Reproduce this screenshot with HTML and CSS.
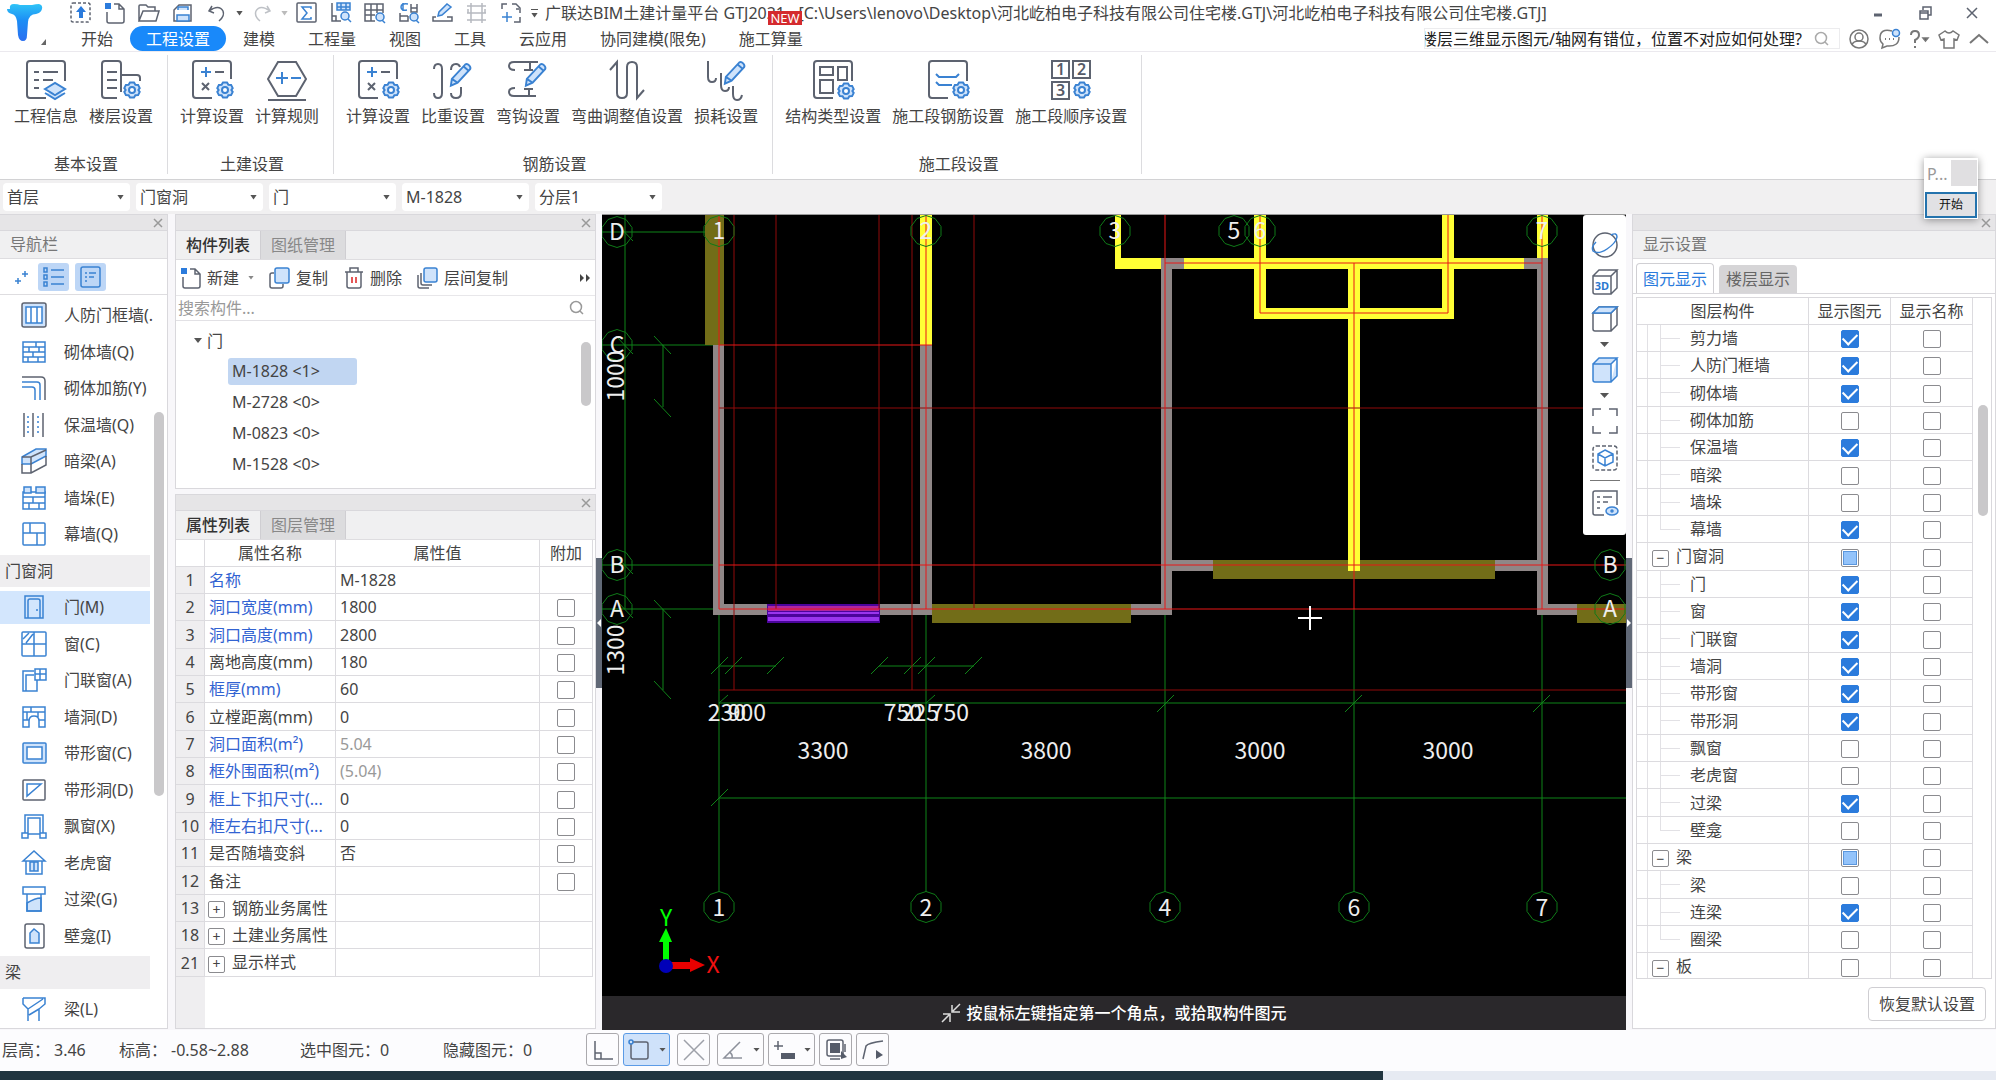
FILE: index.html
```html
<!DOCTYPE html>
<html lang="zh-CN">
<head>
<meta charset="utf-8">
<title>广联达BIM土建计量平台 GTJ2021</title>
<link rel="stylesheet" href="styles.css">
</head>
<body>
<svg class="sprite" aria-hidden="true">
  <defs>
    <linearGradient id="logo-fill" x1="0" y1="0" x2="0" y2="1"><stop offset="0" stop-color="#2fc4f7"/><stop offset=".45" stop-color="#1c8df5"/><stop offset="1" stop-color="#2a6ff0"/></linearGradient>
    <symbol id="gear" viewBox="0 0 18 18"><path d="M7 1.5h4l1.4 2.3 2.7.1 1.6 3.2L15.400 9l1.300 1.900-1.600 3.200-2.700.1L11 16.500H7l-1.400-2.300-2.700-.1-1.600-3.200L2.600 9 1.300 7.100l1.600-3.200 2.700-.1z" class="b f"/><circle cx="9" cy="9" r="3" class="b w"/></symbol>
    <symbol id="pen" viewBox="0 0 26 26"><path d="M3 24l1-7L18 2q2-1 4 1t1 4L10 21zM4 17l6 4M16 4l6 5" class="b f"/></symbol>
    <symbol id="cube" viewBox="0 0 28 28"><path d="M2 8h18v18H4q-2 0-2-2zM2 8l6-6h18l-6 6M26 2v18l-6 6"/></symbol>
    <symbol id="lens" viewBox="0 0 16 16"><circle cx="7" cy="7" r="5.500"/><path d="M11 11l3 3"/></symbol>
    <symbol id="cross" viewBox="0 0 10 10"><path d="M1 1l8 8M9 1L1 9"/></symbol>
    <symbol id="new" viewBox="0 0 22 22"><path d="M10 2h5l5 5v12q0 2-2 2H5q-2 0-2-2v-9M15 2v5h5" class="g"/><path d="M1 1h6v6H1z" fill="#2b7bdc"/></symbol>
    <symbol id="bubble" viewBox="-17 -17 34 34"><path d="M0-15.500l9 3 6 8v9l-6 8-9 3-9-3-6-8v-9l6-8z"/></symbol>
  </defs>
</svg>
<div class="app">
  <header class="top">
    <svg class="logo" viewBox="0 0 50 52"><path d="M10 9q-1-5 4-5 4 0 6 1h12q4-1 7-1 4 1 3 5t-6 5q-7 0-8 8l-1 13q0 6-4 6t-5-6l-1-14q-1-6-5-7-5-1-5-5z" fill="url(#logo-fill)"/><path d="M46 39v6h-5z" fill="#666"/></svg>
    <div class="bars">
      <div class="title-row">
        <div class="quick">
          <button aria-label="上传"><svg viewBox="0 0 22 22"><rect x="1" y="1" width="19" height="19" rx="2" class="g" stroke-dasharray="3 2"/><path d="M11 4l5 6h-3v6H9v-6H6z" fill="#2b7bdc"/></svg></button>
          <button aria-label="新建工程"><svg viewBox="0 0 22 22"><use href="#new"/></svg></button>
          <button aria-label="打开"><svg viewBox="0 0 22 22"><path d="M1 19V4q0-1 1-1h6l2 2h7v4M1 19L5 9h16l-3 10z" class="g"/></svg></button>
          <button aria-label="保存"><svg viewBox="0 0 22 22"><path d="M2 8l5-5h12v16H2z" class="g"/><path d="M6 8V5h10v3M5 19v-6h12v6z" class="b f"/></svg></button>
          <button aria-label="撤销"><svg viewBox="0 0 22 22"><path d="M6 4L3 9l5 2M3 9q10-7 14 0 2 5-4 10" class="g"/></svg></button>
          <i class="caret"></i>
          <button aria-label="重做"><svg viewBox="0 0 22 22" opacity=".4"><path d="M16 4l3 5-5 2M19 9Q9 2 5 9q-2 5 4 10" class="g"/></svg></button>
          <i class="caret faint"></i>
          <button aria-label="汇总计算"><svg viewBox="0 0 22 22"><rect x="1" y="1" width="19" height="19" rx="1" class="g"/><path d="M15 7V5H6l5 6-5 6h9v-2" class="b"/></svg></button>
          <button aria-label="查看报表"><svg viewBox="0 0 22 22"><path d="M2 1v18h9M2 14h4v5" class="g"/><path d="M7 1h13v7H7zM11 1v7M16 1v7M7 5h13" class="b f"/><circle cx="15" cy="14" r="4" class="b f"/><path d="M18 17l3 3" class="b"/></svg></button>
          <button aria-label="查看工程量"><svg viewBox="0 0 22 22"><path d="M11 19H1V2h18v9M1 8h18M1 13h10M7 2v17M13 2v9" class="g"/><circle cx="16" cy="15" r="4" class="b f"/><path d="M18 18l3 3" class="b"/></svg></button>
          <button aria-label="查看计算式"><svg viewBox="0 0 22 22"><path d="M2 11v8h8v-5M2 14h8M13 2v8h6V2M13 6h6" class="g"/><path d="M10 2q-7-1-7 3t6 3M5 1v8" class="b"/><circle cx="16" cy="15" r="4" class="b f"/><path d="M18 18l3 3" class="b"/></svg></button>
          <button aria-label="编辑"><svg viewBox="0 0 22 22"><path d="M6 14l1-4 8-8 4 3-9 8z" class="b f"/><path d="M4 15H1v4h19v-4h-5" class="g"/></svg></button>
          <button aria-label="钢筋三维"><svg viewBox="0 0 22 22" opacity=".45"><path d="M5 1v20M16 1v20M1 4h19M1 11h19M1 18h19M2 7v4M19 7v4" class="g"/></svg></button>
          <button aria-label="拾取"><svg viewBox="0 0 22 22"><path d="M2 7V2h5M12 2h4l4 4v5M20 15v5h-6M16 7h3" class="g"/><path d="M7 10v10M2 15h10" class="b"/></svg></button>
          <span class="drop"><i class="caret"></i></span>
        </div>
        <h1>广联达BIM土建计量平台 GTJ2021 - [C:\Users\lenovo\Desktop\河北屹柏电子科技有限公司住宅楼.GTJ\河北屹柏电子科技有限公司住宅楼.GTJ]</h1>
        <span class="badge">NEW</span>
        <div class="win">
          <button aria-label="最小化"><svg viewBox="0 0 16 16"><path d="M4 10h8" class="g" stroke-width="3"/></svg></button>
          <button aria-label="还原"><svg viewBox="0 0 16 16"><path d="M6 5V2h8v8h-3M3 6h8v8H3zM3 8h8" class="g"/></svg></button>
          <button aria-label="关闭"><svg viewBox="0 0 16 16"><path d="M3 3l10 10M13 3L3 13" class="g"/></svg></button>
        </div>
      </div>
      <div class="menu-row">
        <nav class="menu"><a href="#">开始</a><a href="#" class="on">工程设置</a><a href="#">建模</a><a href="#">工程量</a><a href="#">视图</a><a href="#">工具</a><a href="#">云应用</a><a href="#">协同建模(限免)</a><a href="#">施工算量</a></nav>
        <div class="help">
          <div class="find"><input aria-label="搜索帮助" value="楼层三维显示图元/轴网有错位，位置不对应如何处理?"><svg viewBox="0 0 16 16"><use href="#lens"/></svg></div>
          <button aria-label="用户"><svg viewBox="0 0 22 22"><circle cx="11" cy="11" r="9"/><circle cx="11" cy="9" r="4"/><path d="M4 17q1-4 7-4t7 4"/></svg></button>
          <button aria-label="消息"><svg viewBox="0 0 22 22"><path d="M14 3q-12-3-12 7 0 4 3 6l-1 4 5-2q12 1 12-9"/><path d="M7 11h1M11 11h1M15 11h1" stroke-width="2"/><circle cx="18" cy="5" r="3.500" class="b f"/></svg></button>
          <button aria-label="帮助"><svg viewBox="0 0 22 22"><path d="M3 7q0-4 4-4t4 4q0 3-4 5v3M7 18v2" stroke-width="2"/><path d="M15 10h5l-2.500 3z" fill="#555"/></svg></button>
          <button aria-label="皮肤"><svg viewBox="0 0 22 22"><path d="M7 3L1 7l2 5 3-1v9h10v-9l3 1 2-5-6-4q-4 4-8 0z"/></svg></button>
          <button aria-label="收起"><svg viewBox="0 0 22 22"><path d="M2 15l9-8 9 8" stroke-width="2"/></svg></button>
        </div>
      </div>
    </div>
  </header>

  <section class="ribbon">
    <div class="group"><div class="tools">
      <button><svg viewBox="0 0 40 40"><path d="M20 38H4q-3 0-3-3V4q0-3 3-3h32q3 0 3 3v17M8 12h5M17 12h15M8 20h5M17 20h10M8 28h5" class="g"/><path d="M19 29l10-6 10 6-10 6zM19 33l10 6 10-6" class="b f"/></svg>工程信息</button>
      <button><svg viewBox="0 0 40 40"><path d="M16 38H4q-3 0-3-3V4q0-3 3-3h13q3 0 3 3v28M6 12h10M6 20h10M6 28h10M20 15h16q3 0 3 3v3" class="g"/><use href="#gear" x="22" y="21" width="18" height="18"/></svg>楼层设置</button>
    </div><h2>基本设置</h2></div>
    <div class="group"><div class="tools">
      <button><svg viewBox="0 0 40 40"><path d="M20 38H4q-3 0-3-3V4q0-3 3-3h32q3 0 3 3v15M23 12h9M10 23l7 7M17 23l-7 7" class="g"/><path d="M9 12h10M14 7v10" class="b"/><use href="#gear" x="24" y="21" width="18" height="18"/></svg>计算设置</button>
      <button><svg viewBox="0 0 40 40"><path d="M11 2h18l10 17-10 17H11L1 19zM1 40h38" class="g"/><path d="M9 18h12M15 12v12M24 18h10" class="b"/></svg>计算规则</button>
    </div><h2>土建设置</h2></div>
    <div class="group"><div class="tools">
      <button><svg viewBox="0 0 40 40"><path d="M20 38H4q-3 0-3-3V4q0-3 3-3h32q3 0 3 3v15M23 12h9M10 23l7 7M17 23l-7 7" class="g"/><path d="M9 12h10M14 7v10" class="b"/><use href="#gear" x="24" y="21" width="18" height="18"/></svg>计算设置</button>
      <button><svg viewBox="0 0 40 40"><path d="M1 9q0-5 4-5t4 5v24q0 5-4 5t-4-5M18 10q0-6 5-6 3 0 4 3M18 33q0 5 5 5t5-5v-6" class="g"/><use href="#pen" x="15" y="2" width="25" height="26"/></svg>比重设置</button>
      <button><svg viewBox="0 0 40 40"><path d="M30 2H6Q1 2 1 6t6 4M22 2v8M28 36H6q-5 0-5-4t6-4M16 10h9M16 29h9M21 29v7" class="g"/><use href="#pen" x="15" y="2" width="25" height="26"/></svg>弯钩设置</button>
      <button><svg viewBox="0 0 40 40"><path d="M3 10l7-8v31q0 5 5 5t5-5V7q0-5 5-5t5 5v31l7-8" class="g"/></svg>弯曲调整值设置</button>
      <button><svg viewBox="0 0 40 40"><path d="M2 1v16q0 5 4 5t4-4M15 13v12q0 6 4 6t4-4M27 26v8q0 6 4 6t5-5" class="g"/><use href="#pen" x="16" y="0" width="25" height="26"/></svg>损耗设置</button>
    </div><h2>钢筋设置</h2></div>
    <div class="group"><div class="tools">
      <button><svg viewBox="0 0 40 40"><path d="M20 38H4q-3 0-3-3V4q0-3 3-3h32q3 0 3 3v17M7 7h13v8H7zM25 7h9v13h-9zM7 20h13v13H7z" class="g"/><use href="#gear" x="24" y="22" width="18" height="18"/></svg>结构类型设置</button>
      <button><svg viewBox="0 0 40 40"><path d="M20 38H4q-3 0-3-3V4q0-3 3-3h32q3 0 3 3v17" class="g"/><path d="M8 14l3 3h17l3-3M8 22l3 3h13" class="b"/><use href="#gear" x="24" y="21" width="18" height="18"/></svg>施工段钢筋设置</button>
      <button><svg viewBox="0 0 40 40"><path d="M1 1h17v17H1zM22 1h17v17H22zM1 22h17v17H1z" class="g"/><text x="9.500" y="15">1</text><text x="30.500" y="15">2</text><text x="9.500" y="36">3</text><use href="#gear" x="22" y="21" width="18" height="18"/></svg>施工段顺序设置</button>
    </div><h2>施工段设置</h2></div>
  </section>

  <div class="filters">
    <div class="pick"><select aria-label="楼层"><option>首层</option></select></div>
    <div class="pick"><select aria-label="构件类别"><option>门窗洞</option></select></div>
    <div class="pick"><select aria-label="构件类型"><option>门</option></select></div>
    <div class="pick"><select aria-label="构件"><option>M-1828</option></select></div>
    <div class="pick"><select aria-label="分层"><option>分层1</option></select></div>
  </div>

  <main class="work">
    <aside class="panel nav">
      <div class="strip"><button aria-label="关闭导航栏"><svg viewBox="0 0 10 10"><use href="#cross"/></svg></button></div>
      <h2 class="caption">导航栏</h2>
      <div class="nav-tools">
        <button aria-label="定位"><svg viewBox="0 0 28 28"><path d="M18 8v6M15 11h6M11 15v6M8 18h6" class="b"/></svg></button>
        <button class="on" aria-label="列表"><svg viewBox="0 0 28 28"><path d="M4 5h3v4H4zM4 12h3v4H4zM4 19h3v4H4zM11 7h13M11 14h13M11 21h13" class="b"/></svg></button>
        <button class="on" aria-label="详情"><svg viewBox="0 0 28 28"><rect x="4" y="4" width="19" height="20" rx="2" class="b"/><path d="M8 10h2M12 10h7M8 14h2M12 14h5M8 18h2" class="b"/></svg></button>
      </div>
      <div class="nav-body">
        <ul>
          <li><svg viewBox="0 0 26 26"><rect x="1" y="1" width="24" height="24" rx="2" class="g f"/><path d="M5 5h16v16H5zM10 5v16M16 5v16" class="b w"/></svg><a href="#">人防门框墙(.</a></li>
          <li><svg viewBox="0 0 26 26"><path d="M2 3h22v20H2zM2 8h22M2 13h22M2 18h22M15 3v5M8 8v5M18 8v5M12 13v5M7 18v5M17 18v5" class="b"/></svg><a href="#">砌体墙(Q)</a></li>
          <li><svg viewBox="0 0 26 26"><path d="M1 2h19q4 0 4 4v19" class="g"/><path d="M1 7h15q3 0 3 3v15M1 12h10q3 0 3 3v10" class="b"/></svg><a href="#">砌体加筋(Y)</a></li>
          <li><svg viewBox="0 0 26 26"><path d="M3 1v24M12 1v24M22 1v24" class="g"/><path d="M7 4v19M17 4v19" class="b" stroke-dasharray="2 3"/></svg><a href="#">保温墙(Q)</a></li>
          <li><svg viewBox="0 0 26 26"><path d="M1 9l14-8h10v7l-15 8H1z" class="b f"/><path d="M1 16v9h9l15-8V8M10 9v16M1 9h9l15-7" class="g"/></svg><a href="#">暗梁(A)</a></li>
          <li><svg viewBox="0 0 26 26"><path d="M2 7h22v17H2zM2 12h22M2 18h22M12 12v6M18 18v6M8 18v6" class="b"/><path d="M3 2h7v6H3zM15 2h9v6h-9z" class="b f"/></svg><a href="#">墙垛(E)</a></li>
          <li><svg viewBox="0 0 26 26"><rect x="2" y="2" width="22" height="22" rx="1" class="b"/><path d="M2 12h22M9 2v10M16 12v12" class="b"/></svg><a href="#">幕墙(Q)</a></li>
          <li class="head">门窗洞</li>
          <li class="on"><svg viewBox="0 0 26 26"><path d="M4 2h18v22H4zM7 24V7q0-2 2-2h8q2 0 2 2v17M16 15v2" class="b"/></svg><a href="#">门(M)</a></li>
          <li><svg viewBox="0 0 26 26"><rect x="1" y="1" width="24" height="24" rx="1" class="b"/><path d="M13 1v24M1 13h24M2 8l6-6M5 12l7-9" class="b"/></svg><a href="#">窗(C)</a></li>
          <li><svg viewBox="0 0 26 26"><path d="M13 24H2V4h11M16 13v11h-3M5 24V8h8M14 2h11v11H14zM14 7h11M19 2v11" class="b"/></svg><a href="#">门联窗(A)</a></li>
          <li><svg viewBox="0 0 26 26"><path d="M2 3h22v20h-6v-6q0-5-5-5t-5 5v6H2zM2 8h22M2 16h6M18 16h6M10 3v5M17 8v5M6 8v8" class="b"/></svg><a href="#">墙洞(D)</a></li>
          <li><svg viewBox="0 0 26 26"><rect x="2" y="3" width="23" height="20" rx="1" class="b f"/><path d="M6 7h15v12H6z" class="b w"/></svg><a href="#">带形窗(C)</a></li>
          <li><svg viewBox="0 0 26 26"><rect x="2" y="3" width="22" height="20" rx="1" class="g"/><path d="M6 19V7h14z" class="b"/></svg><a href="#">带形洞(D)</a></li>
          <li><svg viewBox="0 0 26 26"><path d="M4 20V2h18v18M7 20V5h12v15M1 20h6v5H1zM19 20h6v5h-6zM7 21h12" class="b"/></svg><a href="#">飘窗(X)</a></li>
          <li><svg viewBox="0 0 26 26"><path d="M2 11L13 1l11 10zM5 11v13h16V11" class="b"/><path d="M9 12h8v9H9zM13 12v9" class="b f"/></svg><a href="#">老虎窗</a></li>
          <li><svg viewBox="0 0 26 26"><path d="M6 17q8-5 14-5v13H6z" class="b f"/><path d="M2 1h22v7H2zM6 8v17h14V8" class="b"/></svg><a href="#">过梁(G)</a></li>
          <li><svg viewBox="0 0 26 26"><rect x="4" y="1" width="19" height="24" rx="2" class="g"/><path d="M9 20V10l4-4 5 4v10z" class="b f"/></svg><a href="#">壁龛(I)</a></li>
          <li class="head">梁</li>
          <li><svg viewBox="0 0 26 26"><path d="M2 2h22v6L18 13v12M2 2v6l5 5v12M7 13L22 3M8 19l10-6" class="b"/></svg><a href="#">梁(L)</a></li>
        </ul>
        <div class="track"><i class="thumb nav-thumb"></i></div>
      </div>
    </aside>

    <div class="middle">
      <section class="panel parts">
        <div class="strip"><button aria-label="关闭构件列表"><svg viewBox="0 0 10 10"><use href="#cross"/></svg></button></div>
        <div class="tabs"><button class="on">构件列表</button><button>图纸管理</button></div>
        <div class="part-tools">
          <button><svg viewBox="0 0 22 22"><use href="#new"/></svg>新建<i class="caret"></i></button>
          <button><svg viewBox="0 0 22 22"><path d="M5 6H3q-2 0-2 2v11q0 2 2 2h9q2 0 2-2v-2" class="g"/><rect x="6" y="1" width="14" height="15" rx="2" class="b f"/></svg>复制</button>
          <button><svg viewBox="0 0 22 22"><path d="M2 5h18M7 5V1h8v4M4 5v14q0 2 2 2h10q2 0 2-2V5" class="g"/><path d="M9 10v6M13 10v6" stroke="#d22"/></svg>删除</button>
          <button><svg viewBox="0 0 22 22"><path d="M1 8v11q0 2 2 2h9M4 6v10q0 2 2 2h9" class="g"/><rect x="7" y="1" width="13" height="14" rx="2" class="b f"/></svg>层间复制</button>
          <button class="more" aria-label="更多"><svg viewBox="0 0 12 12"><path d="M1 2l4 4-4 4zM7 2l4 4-4 4z" fill="#444"/></svg></button>
        </div>
        <div class="search"><input placeholder="搜索构件..." aria-label="搜索构件"><svg viewBox="0 0 16 16"><use href="#lens"/></svg></div>
        <div class="tree-body">
          <ul class="tree"><li class="root"><i class="caret"></i>门</li><li><a href="#" class="on">M-1828 &lt;1&gt;</a></li><li><a href="#">M-2728 &lt;0&gt;</a></li><li><a href="#">M-0823 &lt;0&gt;</a></li><li><a href="#">M-1528 &lt;0&gt;</a></li></ul>
          <div class="track"><i class="thumb tree-thumb"></i></div>
        </div>
      </section>

      <section class="panel props">
        <div class="strip"><button aria-label="关闭属性列表"><svg viewBox="0 0 10 10"><use href="#cross"/></svg></button></div>
        <div class="tabs"><button class="on">属性列表</button><button>图层管理</button></div>
        <div class="prop-body">
        <table class="grid facts">
          <colgroup><col class="c-no"><col class="c-name"><col><col class="c-add"></colgroup>
          <thead><tr><th></th><th>属性名称</th><th>属性值</th><th>附加</th></tr></thead>
          <tbody>
            <tr><td>1</td><td class="key">名称</td><td>M-1828</td><td></td></tr>
            <tr><td>2</td><td class="key">洞口宽度(mm)</td><td>1800</td><td><input type="checkbox" aria-label="附加洞口宽度"></td></tr>
            <tr><td>3</td><td class="key">洞口高度(mm)</td><td>2800</td><td><input type="checkbox" aria-label="附加洞口高度"></td></tr>
            <tr><td>4</td><td>离地高度(mm)</td><td>180</td><td><input type="checkbox" aria-label="附加离地高度"></td></tr>
            <tr><td>5</td><td class="key">框厚(mm)</td><td>60</td><td><input type="checkbox" aria-label="附加框厚"></td></tr>
            <tr><td>6</td><td>立樘距离(mm)</td><td>0</td><td><input type="checkbox" aria-label="附加立樘距离"></td></tr>
            <tr><td>7</td><td class="key">洞口面积(m²)</td><td class="dim">5.04</td><td><input type="checkbox" aria-label="附加洞口面积"></td></tr>
            <tr><td>8</td><td class="key">框外围面积(m²)</td><td class="dim">(5.04)</td><td><input type="checkbox" aria-label="附加框外围面积"></td></tr>
            <tr><td>9</td><td class="key">框上下扣尺寸(...</td><td>0</td><td><input type="checkbox" aria-label="附加框上下扣尺寸"></td></tr>
            <tr><td>10</td><td class="key">框左右扣尺寸(...</td><td>0</td><td><input type="checkbox" aria-label="附加框左右扣尺寸"></td></tr>
            <tr><td>11</td><td>是否随墙变斜</td><td>否</td><td><input type="checkbox" aria-label="附加是否随墙变斜"></td></tr>
            <tr><td>12</td><td>备注</td><td></td><td><input type="checkbox" aria-label="附加备注"></td></tr>
            <tr><td>13</td><td class="fold"><button class="box" aria-label="展开">+</button>钢筋业务属性</td><td></td><td></td></tr>
            <tr><td>18</td><td class="fold"><button class="box" aria-label="展开">+</button>土建业务属性</td><td></td><td></td></tr>
            <tr><td>21</td><td class="fold"><button class="box" aria-label="展开">+</button>显示样式</td><td></td><td></td></tr>
          </tbody>
        </table>
        </div>
      </section>
    </div>

    <div class="gutter"><button class="grip" aria-label="收起左侧"><svg viewBox="0 0 6 10"><path d="M5 1v8L1 5z" fill="#fff"/></svg></button></div>

    <section class="stage">
      <svg class="plan" viewBox="602 215 1024 781" preserveAspectRatio="xMinYMin slice">
        <rect x="602" y="215" width="1024" height="781"/>
        <g class="axis">
          <path d="M625 215V609M602 232H719M602 345H719M602 565H719M602 609H719M663 345V407M663 609V690"/>
          <path d="M719 609V892M926 609V892M1165 609V892M1354 609V892M1542 609V892M719 703H1626M719 798H1626M719 666H776M879 666H974"/>
          <path d="M654 336l17 18M654 399l17 18M654 600l17 18M654 681l17 18M616 223l17 18M616 336l17 18M616 556l17 18M616 600l17 18"/>
          <path d="M711 674l17-17M725 674l17-17M767 674l17-17M871 674l17-17M904 674l17-17M918 674l17-17M965 674l17-17M719 703l9-8M926 703l9-8M1157 712l17-17M1345 712l17-17M1533 712l17-17M711 806l17-17"/>
        </g>
        <g class="wall"><path d="M713 345h11v259h43v11h-54zM920 345h12v270h-52v-11h40zM1131 604h30V258h23v11h-12v291h41v11h-41v44h-41zM1495 560h42V269h-13v-11h24v346h29v11h-40v-44h-42z"/></g>
        <g class="olive"><path d="M705 215h19v130h-19zM932 604h199v19H932zM1213 560h282v19h-282zM1577 604h49v19h-49z"/></g>
        <g class="yellow"><path d="M920 215h12v130h-12zM1115 215h6v43h40v11h-46zM1537 215h11v43h-11zM1184 258h340v11h-340zM1254 215h12v104h-12zM1442 215h12v104h-12zM1254 308h200v11h-200zM1348 258h12v313h-12z"/></g>
        <path d="M767 604h113v19H767z" fill="#4b059b"/><path d="M768 606h111v5H768z" fill="#b0259c"/><path d="M768 612h111v2H768zM768 617h111v4H768z" fill="#9a35ee"/>
        <g class="red low"><path d="M734 215V690M776 215V609M879 215V609M912 215V690M974 215V608M719 408H1626M719 690H1626"/></g>
        <g class="red"><path d="M719 215V609M926 215V609M719 345H932M719 565H1626M719 609H1626M1165 215V609M1165 263H1542M1260 215V313H1448V215M1354 263V609M1542 215V609"/></g>
        <g class="ring">
          <use href="#bubble" x="702" y="214" width="34" height="34"/><use href="#bubble" x="909" y="214" width="34" height="34"/><use href="#bubble" x="1098" y="214" width="34" height="34"/><use href="#bubble" x="1217" y="214" width="34" height="34"/><use href="#bubble" x="1243" y="214" width="34" height="34"/><use href="#bubble" x="1525" y="214" width="34" height="34"/>
          <use href="#bubble" x="600" y="215" width="34" height="34"/><use href="#bubble" x="600" y="328" width="34" height="34"/><use href="#bubble" x="600" y="548" width="34" height="34"/><use href="#bubble" x="600" y="592" width="34" height="34"/><use href="#bubble" x="1593" y="548" width="34" height="34"/><use href="#bubble" x="1593" y="592" width="34" height="34"/>
          <use href="#bubble" x="702" y="890" width="34" height="34"/><use href="#bubble" x="909" y="890" width="34" height="34"/><use href="#bubble" x="1148" y="890" width="34" height="34"/><use href="#bubble" x="1337" y="890" width="34" height="34"/><use href="#bubble" x="1525" y="890" width="34" height="34"/>
        </g>
        <g class="label">
          <text x="719" y="239">1</text><text x="926" y="239">2</text><text x="1115" y="239">3</text><text x="1234" y="239">5</text><text x="1260" y="239">6</text><text x="1542" y="239">7</text>
          <text x="617" y="240">D</text><text x="617" y="353">C</text><text x="617" y="573">B</text><text x="617" y="617">A</text><text x="1610" y="573">B</text><text x="1610" y="617">A</text>
          <text x="719" y="916">1</text><text x="926" y="916">2</text><text x="1165" y="916">4</text><text x="1354" y="916">6</text><text x="1542" y="916">7</text>
          <text x="727" y="721">230</text><text x="747" y="721">900</text><text x="903" y="721">750</text><text x="920" y="721">225</text><text x="950" y="721">750</text>
          <text x="823" y="759">3300</text><text x="1046" y="759">3800</text><text x="1260" y="759">3000</text><text x="1448" y="759">3000</text>
          <text transform="translate(624 376) rotate(-90)">1000</text><text transform="translate(624 650) rotate(-90)">1300</text>
          <text x="666" y="926" class="up">Y</text><text x="713" y="973" class="right">X</text>
        </g>
        <path d="M663 966V942h-4l7-14 6 14h-3v24z" fill="#0f0"/><path d="M666 962h24v-4l15 7-15 7v-3h-24z" fill="#e80000"/><circle cx="666" cy="966" r="7" fill="#0000b8"/>
        <path d="M1310 606v24M1298 618h24" stroke="#fff" stroke-width="2"/>
      </svg>
      <div class="hint"><svg viewBox="0 0 20 20"><path d="M19 1l-7 7M11 2v7h8M1 19l7-7M2 11h7v8"/></svg>按鼠标左键指定第一个角点，或拾取构件图元</div>
      <div class="view-tools">
        <button aria-label="动态观察"><svg viewBox="0 0 28 28"><circle cx="14" cy="14" r="12" class="g"/><path d="M20 4q6-3 6 2-1 6-10 12T2 20q-2-4 3-9" class="b"/></svg></button>
        <button aria-label="三维"><svg viewBox="0 0 28 28"><g class="g"><use href="#cube"/></g><text x="11" y="22" class="mini">3D</text></svg></button>
        <button aria-label="俯视"><svg viewBox="0 0 28 28"><g class="g"><use href="#cube"/></g><path d="M2 8l6-6h18l-6 6z" class="b f"/></svg></button>
        <i class="caret"></i>
        <button aria-label="着色"><svg viewBox="0 0 28 28"><g class="b f"><use href="#cube"/></g></svg></button>
        <i class="caret"></i>
        <button aria-label="全屏"><svg viewBox="0 0 28 28"><path d="M2 9V2h8M18 2h8v7M26 19v7h-8M10 26H2v-7" class="g"/></svg></button>
        <button aria-label="局部三维"><svg viewBox="0 0 28 28"><rect x="2" y="2" width="24" height="24" rx="3" class="g" stroke-dasharray="4 2"/><path d="M14 6l8 4v8l-8 4-7-4v-8zM7 10l7 4 8-4M14 14v8" class="b"/></svg></button>
        <hr>
        <button aria-label="显示设置"><svg viewBox="0 0 28 28"><path d="M13 26H4q-2 0-2-2V4q0-2 2-2h22v14M6 8h3M12 8h9M6 13h3M12 13h5M6 19h3" class="g"/><ellipse cx="21" cy="22" rx="6" ry="4" class="b f"/><circle cx="21" cy="22" r="1" class="b"/></svg></button>
      </div>
    </section>

    <div class="gutter"><button class="grip" aria-label="收起右侧"><svg viewBox="0 0 6 10"><path d="M1 1v8l4-4z" fill="#fff"/></svg></button></div>

    <aside class="panel display">
      <div class="strip"><button aria-label="关闭显示设置"><svg viewBox="0 0 10 10"><use href="#cross"/></svg></button></div>
      <h2 class="caption">显示设置</h2>
      <div class="pill-tabs"><button class="on">图元显示</button><button>楼层显示</button></div>
      <div class="layer-body">
        <table class="grid layers">
          <colgroup><col><col class="c-show"><col class="c-show"></colgroup>
          <thead><tr><th>图层构件</th><th>显示图元</th><th>显示名称</th></tr></thead>
          <tbody>
            <tr><td class="leaf">剪力墙</td><td><input type="checkbox" aria-label="显示剪力墙" checked></td><td><input type="checkbox" aria-label="剪力墙名称"></td></tr>
            <tr><td class="leaf">人防门框墙</td><td><input type="checkbox" aria-label="显示人防门框墙" checked></td><td><input type="checkbox" aria-label="人防门框墙名称"></td></tr>
            <tr><td class="leaf">砌体墙</td><td><input type="checkbox" aria-label="显示砌体墙" checked></td><td><input type="checkbox" aria-label="砌体墙名称"></td></tr>
            <tr><td class="leaf">砌体加筋</td><td><input type="checkbox" aria-label="显示砌体加筋"></td><td><input type="checkbox" aria-label="砌体加筋名称"></td></tr>
            <tr><td class="leaf">保温墙</td><td><input type="checkbox" aria-label="显示保温墙" checked></td><td><input type="checkbox" aria-label="保温墙名称"></td></tr>
            <tr><td class="leaf">暗梁</td><td><input type="checkbox" aria-label="显示暗梁"></td><td><input type="checkbox" aria-label="暗梁名称"></td></tr>
            <tr><td class="leaf">墙垛</td><td><input type="checkbox" aria-label="显示墙垛"></td><td><input type="checkbox" aria-label="墙垛名称"></td></tr>
            <tr><td class="leaf end">幕墙</td><td><input type="checkbox" aria-label="显示幕墙" checked></td><td><input type="checkbox" aria-label="幕墙名称"></td></tr>
            <tr><td class="branch"><button class="box" aria-label="折叠">−</button>门窗洞</td><td><input type="checkbox" class="partial" aria-label="显示门窗洞"></td><td><input type="checkbox" aria-label="门窗洞名称"></td></tr>
            <tr><td class="leaf">门</td><td><input type="checkbox" aria-label="显示门" checked></td><td><input type="checkbox" aria-label="门名称"></td></tr>
            <tr><td class="leaf">窗</td><td><input type="checkbox" aria-label="显示窗" checked></td><td><input type="checkbox" aria-label="窗名称"></td></tr>
            <tr><td class="leaf">门联窗</td><td><input type="checkbox" aria-label="显示门联窗" checked></td><td><input type="checkbox" aria-label="门联窗名称"></td></tr>
            <tr><td class="leaf">墙洞</td><td><input type="checkbox" aria-label="显示墙洞" checked></td><td><input type="checkbox" aria-label="墙洞名称"></td></tr>
            <tr><td class="leaf">带形窗</td><td><input type="checkbox" aria-label="显示带形窗" checked></td><td><input type="checkbox" aria-label="带形窗名称"></td></tr>
            <tr><td class="leaf">带形洞</td><td><input type="checkbox" aria-label="显示带形洞" checked></td><td><input type="checkbox" aria-label="带形洞名称"></td></tr>
            <tr><td class="leaf">飘窗</td><td><input type="checkbox" aria-label="显示飘窗"></td><td><input type="checkbox" aria-label="飘窗名称"></td></tr>
            <tr><td class="leaf">老虎窗</td><td><input type="checkbox" aria-label="显示老虎窗"></td><td><input type="checkbox" aria-label="老虎窗名称"></td></tr>
            <tr><td class="leaf">过梁</td><td><input type="checkbox" aria-label="显示过梁" checked></td><td><input type="checkbox" aria-label="过梁名称"></td></tr>
            <tr><td class="leaf end">壁龛</td><td><input type="checkbox" aria-label="显示壁龛"></td><td><input type="checkbox" aria-label="壁龛名称"></td></tr>
            <tr><td class="branch"><button class="box" aria-label="折叠">−</button>梁</td><td><input type="checkbox" class="partial" aria-label="显示全部梁"></td><td><input type="checkbox" aria-label="全部梁名称"></td></tr>
            <tr><td class="leaf">梁</td><td><input type="checkbox" aria-label="显示梁"></td><td><input type="checkbox" aria-label="梁名称"></td></tr>
            <tr><td class="leaf">连梁</td><td><input type="checkbox" aria-label="显示连梁" checked></td><td><input type="checkbox" aria-label="连梁名称"></td></tr>
            <tr><td class="leaf end">圈梁</td><td><input type="checkbox" aria-label="显示圈梁"></td><td><input type="checkbox" aria-label="圈梁名称"></td></tr>
            <tr><td class="branch"><button class="box" aria-label="折叠">−</button>板</td><td><input type="checkbox" aria-label="显示板"></td><td><input type="checkbox" aria-label="板名称"></td></tr>
          </tbody>
        </table>
        <div class="track"><i class="thumb layer-thumb"></i></div>
      </div>
      <div class="foot"><button>恢复默认设置</button></div>
    </aside>
  </main>

  <footer class="status">
    <dl>
      <div><dt>层高：</dt><dd>3.46</dd></div>
      <div><dt>标高：</dt><dd>-0.58~2.88</dd></div>
      <div><dt>选中图元：</dt><dd>0</dd></div>
      <div><dt>隐藏图元：</dt><dd>0</dd></div>
    </dl>
    <div class="modes">
      <button aria-label="正交"><svg viewBox="0 0 24 24"><path d="M4 3v18h18M4 15h6v6" class="g"/></svg></button>
      <button class="on" aria-label="捕捉"><svg viewBox="0 0 24 24"><rect x="4" y="4" width="17" height="17" rx="2" class="g"/><circle cx="4" cy="4" r="2" class="b f"/></svg><i class="caret"></i></button>
      <button aria-label="取消"><svg viewBox="0 0 24 24" opacity=".6"><path d="M2 2l20 20M22 2L2 22" class="g"/></svg></button>
      <button aria-label="角度"><svg viewBox="0 0 24 24" opacity=".7"><path d="M19 4L3 20h18M8 14q4 2 3 6" class="g"/></svg><i class="caret"></i></button>
      <button aria-label="动态输入"><svg viewBox="0 0 24 24"><path d="M6 3v9M2 8h9" class="g"/><path d="M9 15h14v6H9z" fill="#555b69"/></svg><i class="caret"></i></button>
      <button aria-label="选择"><svg viewBox="0 0 24 24"><rect x="3" y="2" width="16" height="16" rx="2" class="g"/><path d="M6 5h10v10H6zM17 13l6 6-6 2z" fill="#555b69"/><path d="M6 21h10M21 6v8" class="g"/></svg></button>
      <button aria-label="折线"><svg viewBox="0 0 24 24"><path d="M2 21l3-13Q7 5 22 3" class="g"/><path d="M15 12l7 5-7 4z" fill="#555b69"/></svg></button>
    </div>
  </footer>
  <div class="taskbar"></div>

  <div class="float"><div><span>P...</span><i></i></div><button>开始</button></div>
</div>
</body>
</html>
```
FILE: styles.css
```css
* { box-sizing: border-box; }
body, h1, h2, ul, dl, dd { margin: 0; padding: 0; }
body {
  font: 16px/20px "Noto Sans", "Noto Sans CJK SC", sans-serif;
  color: #444;
  background: #fff;
}
ul { list-style: none; }
h1, h2 { font-size: 16px; font-weight: 400; white-space: nowrap; }
a { color: inherit; text-decoration: none; white-space: nowrap; }
button, input, select { font: inherit; color: inherit; }
button { padding: 0; border: 0; background: none; white-space: nowrap; flex: none; }
svg { display: block; flex: none; fill: none; stroke-width: 1.5; overflow: visible; }
svg .g { stroke: #5d6370; }
svg .b { stroke: #3a82d2; }
svg .f { fill: #cfe3fb; }
svg .w { fill: #fff; }
.sprite { position: absolute; width: 0; height: 0; }
.caret { flex: none; width: 8px; height: 5px; background: #555; clip-path: polygon(0 0, 100% 0, 50% 100%); }
.faint { opacity: .4; }

.app { position: relative; display: flex; flex-direction: column; height: 100vh; min-height: 1080px; overflow: hidden; }

/* title bar and menu */
.top { display: flex; height: 52px; border-bottom: 1px solid #ebe9ee; flex: none; }
.logo { width: 50px; height: 52px; }
.bars { flex: 1; min-width: 0; }
.title-row { position: relative; display: flex; align-items: center; height: 26px; }
.quick { display: flex; align-items: center; gap: 12px; width: 495px; padding-left: 20px; flex: none; }
.quick svg { width: 22px; height: 22px; }
.quick .caret { width: 7px; margin: 0 -4px; }
.quick .drop { padding-top: 3px; border-top: 1px solid #555; }
.quick .drop { display: flex; width: 7px; margin-left: -3px; }
.quick .drop .caret { margin: 0; }
.badge { position: absolute; left: 718px; top: 11px; width: 34px; font-size: 13px; line-height: 14px; text-align: center; background: #d42a2e; color: #fff; }
.win { display: flex; gap: 31px; margin-left: auto; padding-right: 16px; }
.win svg { width: 16px; height: 16px; }
.menu-row { display: flex; justify-content: space-between; height: 25px; }
.menu { display: flex; gap: 1px; padding-left: 15px; }
.menu a { padding: 0 16px; line-height: 26px; }
.menu .on { background: #1989fa; color: #fff; border-radius: 13px; }
.help { display: flex; align-items: center; gap: 8px; padding-right: 6px; }
.help svg { width: 22px; height: 22px; stroke: #777; }
.find { display: flex; align-items: center; width: 416px; height: 21px; border: 1px solid #ececee; }
.find input { flex: 1; min-width: 0; padding: 0; border: 0; outline: 0; color: #222; text-indent: -4px; line-height: 20px; height: 20px; background: none; }
.find svg { width: 16px; height: 16px; margin-right: 9px; stroke: #aaa; }

/* ribbon */
.ribbon { display: flex; height: 128px; padding-left: 2px; border-bottom: 1px solid #d2d2d4; flex: none; }
.group { display: flex; flex-direction: column; align-items: center; margin: 3px 0 5px; padding: 5px 14px 0 12px; border-right: 1px solid #dcdcdf; }
.tools { display: flex; gap: 11px; flex: 1; }
.tools button { display: flex; flex-direction: column; align-items: center; justify-content: flex-start; gap: 6px; }
.tools svg { width: 40px; height: 40px; stroke-width: 2; }
.tools text { fill: #555b69; font-size: 16px; font-weight: 600; text-anchor: middle; }
.group h2 { padding-left: 5px; line-height: 20px; }

/* filter row */
.filters { display: flex; gap: 6px; height: 34px; padding: 3px; background: #f1f0f1; flex: none; }
.pick { display: grid; align-items: center; width: 127px; height: 28px; background: #fff; border-radius: 4px; }
.pick select { grid-area: 1 / 1; appearance: none; width: 100%; height: 28px; padding: 0 20px 0 4px; border: 0; background: none; }
.pick::after { content: ""; grid-area: 1 / 1; justify-self: end; width: 7px; height: 5px; margin-right: 6px; background: #555; clip-path: polygon(0 0, 100% 0, 50% 100%); pointer-events: none; }

/* docked panels */
.work { display: flex; flex: 1; min-height: 0; background: #f8f7fa; }
.panel { display: flex; flex-direction: column; background: #fff; border: 1px solid #d9d8dc; min-height: 0; }
.strip { display: flex; justify-content: flex-end; align-items: center; height: 16px; padding-right: 4px; background: #e6e5e7; border-bottom: 1px solid #d9d8dc; flex: none; }
.strip svg { width: 10px; height: 10px; stroke: #999; }
.caption { height: 28px; padding-left: 10px; line-height: 26px; color: #777; background: #f0f0f1; border-bottom: 1px solid #dedde0; flex: none; }
.tabs { display: flex; height: 29px; background: #f0f0f1; border-bottom: 1px solid #dedde0; flex: none; }
.tabs button { width: 85px; color: #888; background: #dcdcde; border: solid #cfced2; border-width: 0 1px 0 0; }
.tabs .on { font-weight: 500; color: #333; background: #f0f0f1; }
.track { flex: none; display: flex; }
.thumb { width: 10px; border-radius: 5px; background: #c9c8ca; }

.nav { width: 168px; margin: 0 7px 1px 0; border-left: 0; flex: none; }
.nav-tools { display: flex; align-items: center; gap: 6px; height: 36px; padding-left: 7px; border-bottom: 1px solid #dedde0; flex: none; }
.nav-tools button { display: grid; place-items: center; width: 31px; height: 28px; border-radius: 3px; }
.nav-tools .on { background: #bdd6f6; }
.nav-tools button:first-child { width: 25px; }
.nav-tools svg { width: 28px; height: 28px; }
.nav-body { display: flex; flex: 1; min-height: 0; padding: 2px 0 1px; }
.nav-body ul { display: flex; flex-direction: column; width: 154px; padding-right: 4px; }
.nav-body li { display: flex; flex: 1; align-items: center; gap: 17px; padding-left: 21px; border: solid #fff; border-width: 2px 0; }
.nav-body svg { width: 26px; height: 26px; }
.nav-body .head { padding-left: 5px; background: #efeef0; }
.nav-body li.on { background: #d3e6fd; }
.nav-thumb { height: 384px; margin-top: 115px; }

.middle { display: flex; flex-direction: column; gap: 5px; width: 421px; margin-bottom: 1px; flex: none; }
.parts { height: 275px; flex: none; }
.part-tools { display: flex; align-items: center; gap: 15px; height: 36px; padding-left: 4px; border-bottom: 1px solid #e8e7ea; flex: none; }
.part-tools button { display: flex; align-items: center; gap: 5px; }
.part-tools svg { width: 22px; height: 22px; }
.part-tools .caret { width: 6px; height: 4px; margin-left: 4px; background: #888; }
.part-tools .more { margin: 0 4px 0 auto; }
.part-tools .more svg { width: 12px; height: 12px; }
.search { display: flex; align-items: center; height: 25px; padding: 0 10px 0 2px; border-bottom: 1px solid #e2e1e5; flex: none; }
.search input { flex: 1; min-width: 0; height: 22px; padding: 0; border: 0; outline: 0; }
.search input::placeholder { color: #999; opacity: 1; }
.search svg { width: 16px; height: 16px; stroke: #999; }
.tree-body { display: flex; justify-content: space-between; flex: 1; padding: 4px 4px 0 16px; }
.tree li { height: 31px; padding: 2px 0 0 36px; }
.tree li.root { display: flex; align-items: center; gap: 5px; padding: 0 0 0 2px; }
.tree a { display: block; width: 129px; padding-left: 4px; line-height: 27px; border-radius: 3px; }
.tree .on { background: #c1d6f2; }
.tree-thumb { height: 64px; margin-top: 17px; }
.props { flex: 1; }
.prop-body { flex: 1; padding-right: 2px; background: linear-gradient(90deg, #efeef0 29px, #fff 29px); }

.grid { width: 100%; border-collapse: separate; border-spacing: 0; table-layout: fixed; }
.grid th, .grid td { padding: 0 0 0 4px; height: 27px; line-height: 20px; border: solid #dcdbdf; border-width: 0 1px 1px 0; white-space: nowrap; overflow: hidden; }
.grid tr:nth-child(3n) td { height: 28px; }
.grid th { padding: 0; font-weight: 400; text-align: center; background: #fff; }
.facts td:first-child, .facts td:last-child { text-align: center; padding: 0; }
.c-no { width: 29px; }
.c-name { width: 131px; }
.c-add { width: 53px; }
.grid .key { color: #3263d2; }
.grid .dim { color: #999; }
.grid .fold { padding-left: 3px; }
input[type=checkbox] { appearance: none; display: inline-grid; place-items: center; width: 18px; height: 18px; margin: 0; border: 1px solid #8b8b8f; border-radius: 2px; background: #fff; vertical-align: middle; }
input[type=checkbox]:checked { background: #2b7bdc; border-color: #2b7bdc; }
input[type=checkbox]:checked::before { content: ""; width: 12px; height: 7px; margin-top: -4px; border: solid #fff; border-width: 0 0 2px 2px; rotate: -45deg; }
input.partial::before { content: ""; width: 12px; height: 12px; background: #93c3fa; border: 1px solid #5a96dd; }
.box { display: inline-block; width: 17px; height: 17px; margin-right: 7px; line-height: 14px; font-size: 14px; border: 1px solid #8b8b8f; border-radius: 2px; background: #fff; vertical-align: middle; }

/* model view */
.gutter { display: flex; width: 6px; padding-top: 344px; flex: none; }
.grip { display: grid; place-items: center; width: 6px; height: 130px; background: #606876; }
.grip svg { width: 6px; height: 10px; }
.stage { position: relative; display: flex; flex-direction: column; flex: 1; min-width: 0; border-top: 1px solid #999; background: #000; }
.plan { flex: 1; min-height: 0; width: 100%; overflow: hidden; stroke-width: 1; }
.plan > rect { fill: #000; }
.axis { stroke: #0f8418; }
.ring { stroke: #0f7a18; }
.wall { fill: #8f8787; }
.olive { fill: #726d18; }
.yellow { fill: #ffff35; }
.red { stroke: #e81616; }
.low { stroke: #900a0a; }
.label text { fill: #eee; font: 23px "Noto Sans CJK SC", sans-serif; text-anchor: middle; }
.label .up { fill: #0f0; }
.label .right { fill: #f01010; }
.hint { display: flex; align-items: center; justify-content: center; gap: 5px; height: 34px; color: #fff; font-weight: 500; background: #2a282b; flex: none; }
.hint svg { width: 20px; height: 20px; stroke: #ddd; }
.view-tools { position: absolute; right: 0; top: 0; display: flex; flex-direction: column; align-items: center; gap: 9px; width: 43px; height: 320px; padding-top: 16px; background: #fff; border-radius: 3px; }
.view-tools svg { width: 28px; height: 28px; }
.view-tools .caret { width: 9px; height: 5px; }
.view-tools hr { width: 30px; height: 1px; margin: -1px 0; border: 0; background: #777; }
.mini { fill: #2b78cf; font-size: 11px; font-weight: 700; text-anchor: middle; }

/* display settings */
.display { width: 364px; margin-bottom: 1px; flex: none; }
.pill-tabs { display: flex; align-items: flex-end; gap: 5px; height: 35px; padding-left: 3px; border-bottom: 1px solid #d9d8dc; flex: none; }
.pill-tabs button { width: 78px; height: 28px; color: #666; background: #d6d5d7; border-radius: 4px 4px 0 0; }
.pill-tabs .on { height: 30px; color: #2b7bdc; background: #fff; border: 1px solid #d0cfd3; border-bottom: 0; }
.layer-body { display: flex; flex: 1; min-height: 0; margin: 3px 3px 0; border: 1px solid #d9d8dc; overflow: hidden; }
.layer-body .grid { width: 336px; flex: none; align-self: flex-start; }
.layer-thumb { height: 111px; margin: 107px 0 0 5px; }
.c-show { width: 82px; }
.layers td { text-align: center; padding: 0; }
.layers tbody .leaf { text-align: left; padding-left: 53px; background: linear-gradient(#e2e1e5, #e2e1e5) 10px 0 / 1px 100% no-repeat, linear-gradient(#e2e1e5, #e2e1e5) 23px 0 / 1px 100% no-repeat, linear-gradient(#e2e1e5, #e2e1e5) 23px 50% / 20px 1px no-repeat; }
.layers tbody .end { background-size: 1px 100%, 1px 50%, 20px 1px; }
.layers tbody .branch { text-align: left; padding-left: 15px; background: linear-gradient(#e2e1e5, #e2e1e5) 10px 0 / 1px 100% no-repeat; }
.foot { display: flex; justify-content: flex-end; padding: 8px 9px 7px 0; flex: none; }
.foot button { width: 118px; height: 34px; border: 1px solid #cfced2; border-radius: 4px; }

/* status bar */
.status { display: flex; align-items: center; height: 41px; padding-bottom: 2px; background: #fcfcfe; flex: none; }
.status dl { display: flex; width: 586px; padding-left: 2px; }
.status dl div { display: flex; gap: 4px; white-space: nowrap; }
.status dl div:nth-child(1) { width: 117px; }
.status dl div:nth-child(2) { width: 181px; }
.status dl div:nth-child(3) { width: 143px; gap: 0; }
.status dl div:nth-child(4) { gap: 0; }
.modes { display: flex; gap: 4px; }
.modes button { display: flex; align-items: center; justify-content: center; gap: 8px; min-width: 33px; height: 33px; border: 1px solid #aaa9ad; border-radius: 3px; }
.modes button:has(.caret) { width: 47px; }
.modes button:nth-child(3) { margin: 0 3px; }
.modes .on { background: #cfe2fa; border-color: #5b9be6; }
.modes svg { width: 24px; height: 24px; }
.modes .caret { width: 7px; height: 4px; }
.taskbar { height: 9px; background: linear-gradient(90deg, #20343f 1383px, #e6eaf2 1383px); flex: none; }

.float { position: absolute; right: 18px; top: 158px; width: 54px; padding: 2px 1px 1px; background: #fff; box-shadow: 0 1px 8px #0006; }
.float div { display: flex; justify-content: space-between; height: 32px; color: #999; line-height: 28px; padding-left: 2px; }
.float i { width: 26px; height: 26px; background: #e0dfe1; }
.float button { display: block; width: 52px; height: 26px; font-size: 12px; color: #111; border: 2px solid #2473ad; background: #e1e1e4; }
```
